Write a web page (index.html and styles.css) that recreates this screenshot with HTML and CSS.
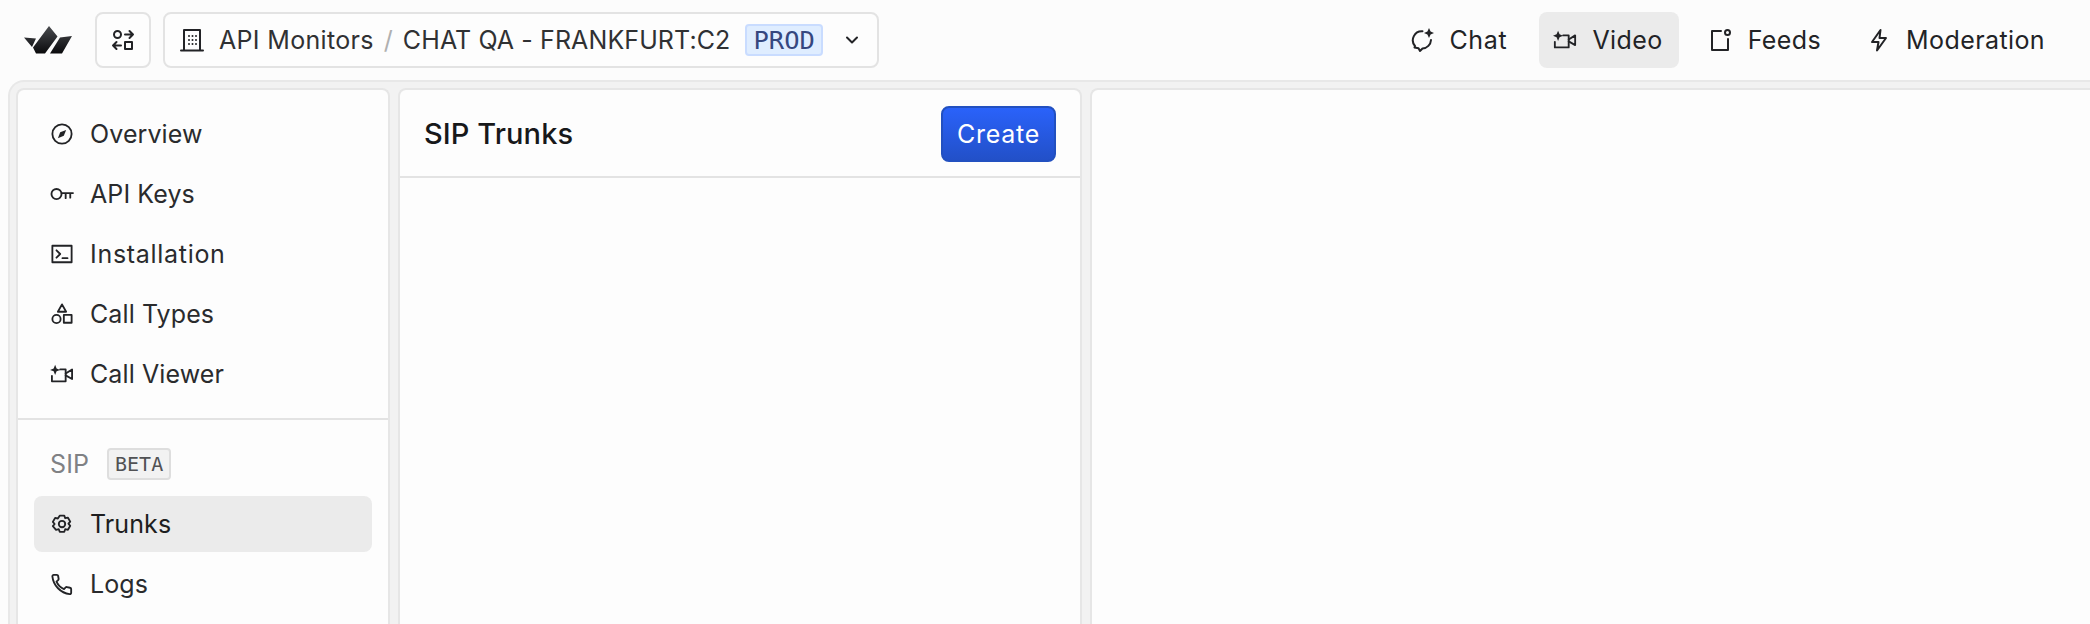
FILE: index.html
```html
<!DOCTYPE html>
<html lang="en">
<head>
<meta charset="utf-8">
<title>SIP Trunks</title>
<link rel="stylesheet" href="styles.css">
</head>
<body>
<header class="topbar">
  <svg class="logo" viewBox="24 26 49 29">
    <defs><linearGradient id="lg" x1="0" y1="0" x2="0" y2="1"><stop offset="0" stop-color="#4a4c50"/><stop offset="1" stop-color="#0a0a0c"/></linearGradient></defs>
    <path fill="url(#lg)" d="M24 37.500 36 38.500 32 47ZM49 26 57.500 36.500 45 53.500H36L33 47.500ZM60 37.500 72 36 62 53.500H50Z"/>
  </svg>
  <button class="square-btn">
    <svg class="ico" viewBox="0 0 24 24"><circle cx="6.500" cy="6.500" r="3.500"/><path d="M14 6.500h8M18.500 3l3.500 3.500-3.500 3.500M10 17.500H2M5.500 14 2 17.500 5.500 21"/><rect x="14" y="14" width="7" height="7"/></svg>
  </button>
  <div class="selector">
    <svg class="ico ico-b" viewBox="0 0 24 24"><path d="M1 22.500h22M4 22.500V2h16v20.500"/><path d="M9 8h.01M12.500 8h.01M16 8h.01M9 12h.01M12.500 12h.01M16 12h.01M9 16h.01M12.500 16h.01M16 16h.01"/></svg>
    <span class="crumb crumb-lead">API Monitors</span>
    <span class="slash">/</span>
    <span class="crumb">CHAT QA - FRANKFURT:C2</span>
    <span class="tag tag-blue">PROD</span>
    <svg class="chev" viewBox="0 0 14 14"><path d="M2 4.500 7 9.500 12 4.500"/></svg>
  </div>
  <nav class="products">
    <a class="product">
      <svg class="ico" viewBox="0 0 24 24"><path d="M12.500 3.200A9 9 0 0 0 5 18l-.5 1.500 4 .8 1.500 2.700 2.500-2.500A9 9 0 0 0 21 12"/><path class="fill" d="M19 0l1.600 3.400L24 5l-3.400 1.600L19 10l-1.600-3.400L14 5l3.400-1.600z"/></svg>
      <span class="wide">Chat</span>
    </a>
    <a class="product is-active">
      <svg class="ico" viewBox="0 0 26 24"><path d="M11 7h6v13H2v-6"/><path d="M17 11.500l7-4.500v10.500L17 13.500"/><path class="fill" d="M5.500 2l1.600 3.900L11 7.500 7.100 9.100 5.500 13 3.900 9.100 0 7.500l3.900-1.600z"/></svg>
      <span>Video</span>
    </a>
    <a class="product">
      <svg class="ico" viewBox="0 0 24 24"><path d="M12 3H3v19h16V11"/><circle cx="18.500" cy="4.500" r="2.500"/></svg>
      <span>Feeds</span>
    </a>
    <a class="product">
      <svg class="ico" viewBox="0 0 24 24"><path d="M13.500 2 5 14h6.500L10 22.500 19 10h-6.500z"/></svg>
      <span>Moderation</span>
    </a>
  </nav>
</header>
<main class="frame">
  <aside class="panel side">
    <section class="side-group">
      <a class="side-item">
        <svg class="ico" viewBox="0 0 24 24"><circle cx="12" cy="12" r="10.500"/><path class="fill" d="M16.500 7.500 14 14l-6.500 2.500L10 10z"/></svg>
        <span>Overview</span>
      </a>
      <a class="side-item">
        <svg class="ico ico-w" viewBox="0 0 26 24"><circle cx="7" cy="12" r="5.500"/><path d="M12.500 11H25M17 11v5.500M22 11v5"/></svg>
        <span>API Keys</span>
      </a>
      <a class="side-item">
        <svg class="ico" viewBox="0 0 24 24"><rect x="1.500" y="3" width="21" height="18"/><path d="M6 8l4 4-4 4M12.500 16.500H18"/></svg>
        <span class="wide">Installation</span>
      </a>
      <a class="side-item">
        <svg class="ico" viewBox="0 0 24 24"><path d="M12 1.500 16.500 9.500h-9z"/><circle cx="6" cy="17.500" r="4.500"/><rect x="14" y="13" width="8.500" height="8.500"/></svg>
        <span>Call Types</span>
      </a>
      <a class="side-item">
        <svg class="ico ico-w" viewBox="0 0 26 24"><path d="M11 7h6v13H2v-6"/><path d="M17 11.500l7-4.500v10.500L17 13.500"/><path class="fill" d="M5.500 2l1.600 3.900L11 7.500 7.100 9.100 5.500 13 3.900 9.100 0 7.500l3.900-1.600z"/></svg>
        <span>Call Viewer</span>
      </a>
    </section>
    <section class="side-group side-group-rule">
      <div class="side-label"><span>SIP</span><span class="tag tag-grey">BETA</span></div>
      <a class="side-item is-active">
        <svg class="ico" viewBox="0 0 24 24"><path d="M9.500 1.500h5l1 2.800 3-.6 2.500 4.300-2 2.300 2 2.300-2.500 4.300-3-.6-1 2.800h-5l-1-2.800-3 .6L2 12.900l2-2.300-2-2.300 2.500-4.300 3 .6z" transform="translate(0 1.400)"/><circle cx="12" cy="12" r="3.500"/></svg>
        <span>Trunks</span>
      </a>
      <a class="side-item">
        <svg class="ico" viewBox="0 0 24 24"><path d="M22 20v1.500a1.500 1.500 0 0 1-1.600 1.500C10.500 22 2.500 13.500 1.500 3.600A1.500 1.500 0 0 1 3 2h3.300a1.500 1.500 0 0 1 1.500 1.300l.5 3a1.500 1.500 0 0 1-.5 1.400L6 9.500c1.500 3.500 4.500 6.500 8.200 8l1.800-1.800a1.500 1.500 0 0 1 1.400-.4l3.400.8a1.500 1.500 0 0 1 1.200 1.500z"/></svg>
        <span>Logs</span>
      </a>
    </section>
  </aside>
  <section class="panel list">
    <div class="list-head">
      <h1>SIP Trunks</h1>
      <button class="create">Create</button>
    </div>
  </section>
  <section class="panel detail"></section>
</main>
</body>
</html>
```
FILE: styles.css
```css
* { box-sizing: border-box; }
html, body { height: 100%; }
body {
  margin: 0;
  background: #fcfcfc;
  color: #27282a;
  font-family: Inter, "Liberation Sans", sans-serif;
  font-size: 25px;
  letter-spacing: 0.1px;
  overflow: hidden;
  display: flex;
  flex-direction: column;
}
.topbar {
  height: 80px;
  flex: none;
  display: flex;
  align-items: center;
  padding: 0 29px 0 24px;
}
.logo { width: 49px; height: 29px; flex: none; }
.ico {
  width: 24px;
  height: 24px;
  flex: none;
  fill: none;
  stroke: #222326;
  stroke-width: 2;
  stroke-linecap: round;
  stroke-linejoin: round;
}
.ico .fill { fill: #222326; stroke: none; }
.square-btn {
  width: 56px;
  height: 56px;
  margin-left: 22px;
  padding: 0;
  display: flex;
  align-items: center;
  justify-content: center;
  background: #fdfdfd;
  border: 2px solid #e3e3e3;
  border-radius: 8px;
}
.selector {
  width: 716px;
  height: 56px;
  margin-left: 12px;
  padding: 0 18px 0 16px;
  display: flex;
  align-items: center;
  background: #fdfdfd;
  border: 2px solid #e3e3e3;
  border-radius: 8px;
}
.ico-b { margin: 0 15px 0 -1px; }
.crumb { color: #303133; white-space: nowrap; }
.crumb-lead { letter-spacing: 0.32px; }
.slash { color: #b0b0b0; margin: 0 10px; }
.tag {
  font-family: "DejaVu Sans Mono", "Liberation Mono", monospace;
  letter-spacing: 0;
  border-radius: 4px;
  border: 2px solid;
  display: flex;
  align-items: center;
  height: 32px;
}
.tag-blue {
  margin-left: 15px;
  padding: 0 6px;
  font-size: 25.500px;
  background: #dfedff;
  border-color: #c9dcff;
  color: #35477f;
}
.chev {
  width: 14px;
  height: 14px;
  margin-left: auto;
  fill: none;
  stroke: #222326;
  stroke-width: 2;
  stroke-linecap: round;
  stroke-linejoin: round;
}
.products {
  margin-left: auto;
  display: flex;
  gap: 16px;
}
.product {
  height: 56px;
  padding: 0 16px 0 14px;
  display: flex;
  align-items: center;
  gap: 15px;
  border-radius: 8px;
  color: #222326;
  letter-spacing: 0.4px;
}
.product.is-active { background: #ebebeb; }
.frame {
  flex: 1;
  min-height: 0;
  margin-left: 8px;
  padding: 6px 0 0 6px;
  display: flex;
  gap: 8px;
  background: #f2f2f2;
  border-top: 2px solid #e8e8e8;
  border-left: 2px solid #e8e8e8;
  border-top-left-radius: 16px;
}
.panel {
  background: #fdfdfd;
  border: 2px solid #e6e6e6;
  border-bottom: 0;
  border-radius: 8px 8px 0 0;
}
.side { width: 374px; flex: none; }
.side-group { padding: 16px; display: flex; flex-direction: column; gap: 4px; }
.side-group-rule { border-top: 2px solid #e3e3e3; }
.side-item {
  height: 56px;
  padding: 0 16px 0 17px;
  display: flex;
  align-items: center;
  gap: 17px;
  border-radius: 8px;
  color: #2a2b2d;
}
.side-item .ico { width: 22px; height: 22px; }
.side-item .ico-w { width: 24px; margin: 0 -1px; }
.wide { letter-spacing: 0.7px; }
.side-item.is-active { background: #ebebeb; color: #1d1e20; }
.side-label {
  height: 56px;
  padding: 0 16px;
  display: flex;
  align-items: center;
  gap: 18px;
  color: #808184;
}
.tag-grey {
  padding: 0 6px;
  font-size: 20px;
  background: #f2f2f2;
  border-color: #dedede;
  color: #505154;
}
.list { width: 684px; flex: none; }
.list-head {
  height: 88px;
  padding: 2px 24px 0;
  display: flex;
  align-items: center;
  justify-content: space-between;
  border-bottom: 2px solid #e3e3e3;
}
.list-head h1 { margin: 0 0 2px; font-size: 29px; font-weight: 450; color: #17181a; }
.create {
  width: 115px;
  height: 56px;
  padding: 0;
  font: 400 25px Inter, "Liberation Sans", sans-serif;
  letter-spacing: 0.7px;
  color: #fff;
  background: linear-gradient(#2a62fa, #2250c8);
  border: 2px solid #2250c0;
  border-radius: 8px;
}
.detail { flex: 1; border-right: 0; border-top-right-radius: 0; }
```
